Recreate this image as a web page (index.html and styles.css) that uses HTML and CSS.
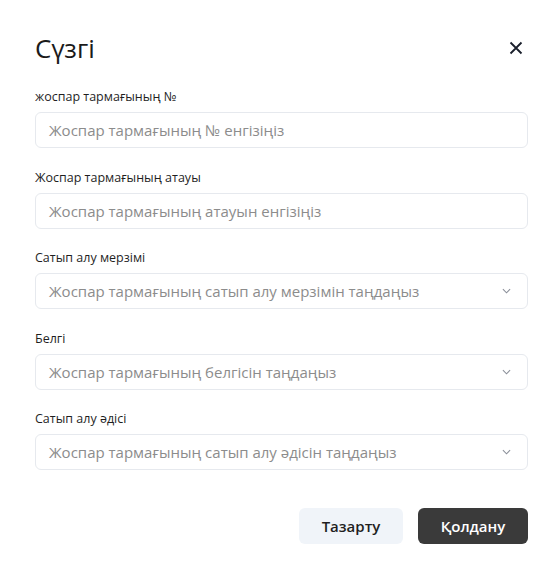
FILE: index.html
```html
<!DOCTYPE html>
<html lang="kk">
<head>
  <meta charset="UTF-8">
  <meta name="viewport" content="width=device-width, initial-scale=1.0">
  <title>Сүзгі</title>
  <link rel="stylesheet" href="styles.css">
</head>
<body>
  <div class="modal">
    <div class="modal-header">
      <h1>Сүзгі</h1>
      <button class="close-btn" aria-label="close">
        <svg width="14" height="14" viewBox="0 0 14 14"><path d="M1.5 1.5 L12.5 12.5 M12.5 1.5 L1.5 12.5" stroke="#1a1f2b" stroke-width="1.8" fill="none"/></svg>
      </button>
    </div>

    <div class="fields">
      <div class="field">
        <label>жоспар тармағының №</label>
        <div class="input">Жоспар тармағының № енгізіңіз</div>
      </div>
      <div class="field">
        <label>Жоспар тармағының атауы</label>
        <div class="input">Жоспар тармағының атауын енгізіңіз</div>
      </div>
      <div class="field">
        <label>Сатып алу мерзімі</label>
        <div class="input select">Жоспар тармағының сатып алу мерзімін таңдаңыз
          <svg class="chevron" width="10" height="6" viewBox="0 0 10 6"><path d="M1 1 L5 5 L9 1" stroke="#8a8f99" stroke-width="1.2" fill="none"/></svg>
        </div>
      </div>
      <div class="field">
        <label>Белгі</label>
        <div class="input select">Жоспар тармағының белгісін таңдаңыз
          <svg class="chevron" width="10" height="6" viewBox="0 0 10 6"><path d="M1 1 L5 5 L9 1" stroke="#8a8f99" stroke-width="1.2" fill="none"/></svg>
        </div>
      </div>
      <div class="field">
        <label>Сатып алу әдісі</label>
        <div class="input select">Жоспар тармағының сатып алу әдісін таңдаңыз
          <svg class="chevron" width="10" height="6" viewBox="0 0 10 6"><path d="M1 1 L5 5 L9 1" stroke="#8a8f99" stroke-width="1.2" fill="none"/></svg>
        </div>
      </div>
    </div>

    <div class="actions">
      <button class="btn btn-light">Тазарту</button>
      <button class="btn btn-dark">Қолдану</button>
    </div>
  </div>
</body>
</html>
```

FILE: styles.css
```css
body { margin: 0; font-family: "Open Sans", "Noto Sans", sans-serif; background: #fff; color: #1f1f1f; }
.modal { padding: 30px 23px 0 35px; }
.modal-header { display: flex; align-items: center; justify-content: space-between; height: 36px; margin-bottom: 21px; }
.modal-header h1 { margin: 0; font-size: 26px; font-weight: 400; color: #1a1a1a; }
.close-btn { border: none; background: none; padding: 0; width: 24px; height: 24px; display: flex; align-items: center; justify-content: center; cursor: pointer; }
.fields { display: flex; flex-direction: column; gap: 19.5px; }
.field { display: flex; flex-direction: column; }
.field label { font-size: 12.5px; line-height: 19px; margin-bottom: 6px; color: #1f1f1f; }
.input {
  height: 36px;
  box-sizing: border-box;
  border: 1px solid #e6e9ee;
  border-radius: 6px;
  padding: 0 14px 0 13px;
  display: flex;
  align-items: center;
  font-size: 15px;
  color: #8c8c8c;
}
.input.select { justify-content: space-between; }
.chevron { margin-right: 2px; width: 9px; }
.actions { display: flex; justify-content: flex-end; gap: 15px; margin-top: 38px; }
.btn {
  height: 36px;
  border: none;
  border-radius: 6px;
  font-family: inherit;
  font-size: 15px;
  font-weight: 600;
  cursor: pointer;
}
.btn-light { width: 104px; background: #f0f4f9; color: #1f1f1f; }
.btn-dark { width: 110px; background: #3a3a3a; color: #fff; }
```
